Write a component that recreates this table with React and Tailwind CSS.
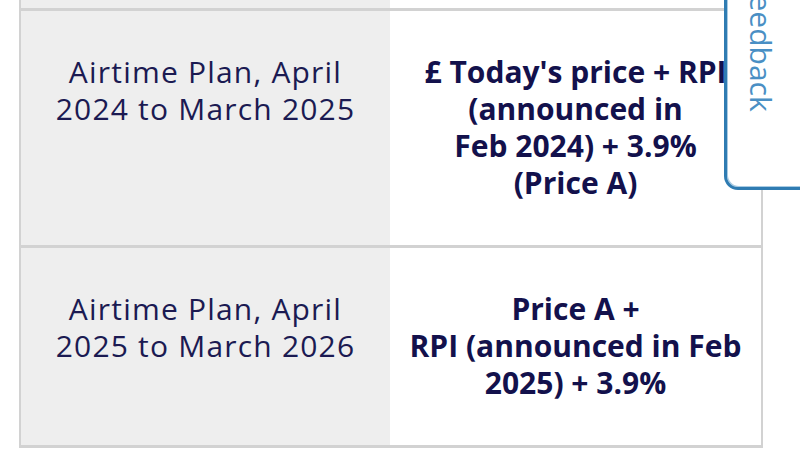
import React from 'react';

const rows = [
  {
    plan: ['Airtime Plan, April', '2024 to March 2025'],
    price: ["£ Today's price + RPI", '(announced in', 'Feb 2024) + 3.9%', '(Price A)'],
  },
  {
    plan: ['Airtime Plan, April', '2025 to March 2026'],
    price: ['Price A +', 'RPI (announced in Feb', '2025) + 3.9%'],
  },
];

function Lines({ lines }) {
  return lines.map((l, i) => (
    <span key={i} className="block whitespace-nowrap">
      {l}
    </span>
  ));
}

export default function App() {
  return (
    <div
      className="relative w-[800px] h-[450px] overflow-hidden bg-white text-[30px] leading-[37px]"
      style={{ fontFamily: '"Open Sans", "Noto Sans", sans-serif' }}
    >
      <div className="ml-[19px] w-[744px] border-x-2 border-[#d2d2d2]">
        {/* tail of the row above */}
        <div className="grid grid-cols-[369px_1fr] h-[8px] border-b-[3px] border-[#d2d2d2] box-content">
          <div className="bg-[#eeeeee]" />
          <div className="bg-white" />
        </div>
        {rows.map((r, i) => (
          <div
            key={i}
            className="grid grid-cols-[369px_1fr] border-b-[3px] border-[#d2d2d2]"
          >
            <div className="bg-[#eeeeee] pt-[42px] pb-[42px] text-center text-[#1b1a52] tracking-[1.2px]">
              <Lines lines={r.plan} />
            </div>
            <div className="bg-white pt-[42px] pb-[44px] text-center font-bold text-[#13114c] flex flex-col items-center">
              <Lines lines={r.price} />
            </div>
          </div>
        ))}
      </div>

      {/* feedback tab */}
      <div className="absolute left-[724px] top-[-20px] w-[110px] h-[210px] bg-white border-[3px] border-[#2f7cb2] rounded-bl-[14px] shadow-[inset_1px_-1px_0_#a9cbe3]">
        <span
          className="absolute left-[19px] top-[-4px] text-[30px] leading-none text-[#4a8fc4]"
          style={{ writingMode: 'vertical-rl' }}
        >
          Feedback
        </span>
      </div>
    </div>
  );
}
